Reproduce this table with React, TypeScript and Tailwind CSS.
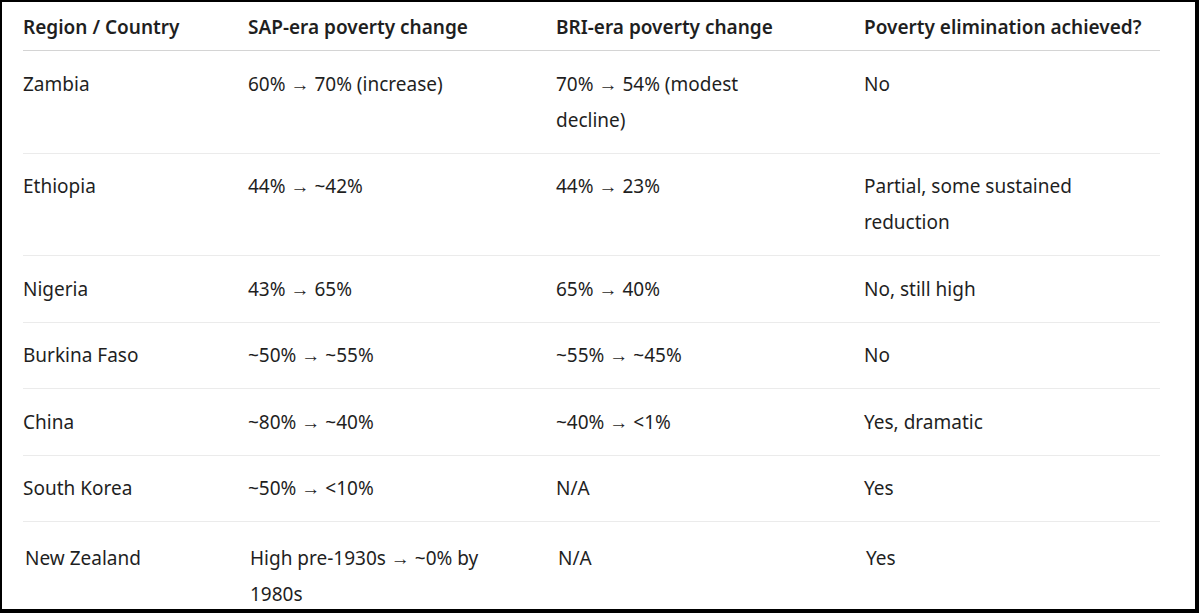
const rows: [string, string, string, string][] = [
  ["Zambia", "60% → 70% (increase)", "70% → 54% (modest decline)", "No"],
  ["Ethiopia", "44% → ~42%", "44% → 23%", "Partial, some sustained reduction"],
  ["Nigeria", "43% → 65%", "65% → 40%", "No, still high"],
  ["Burkina Faso", "~50% → ~55%", "~55% → ~45%", "No"],
  ["China", "~80% → ~40%", "~40% → <1%", "Yes, dramatic"],
  ["South Korea", "~50% → <10%", "N/A", "Yes"],
  ["New Zealand", "High pre-1930s → ~0% by 1980s", "N/A", "Yes"],
];

export default function App() {
  return (
    <div className="w-[1199px] h-[613px] overflow-hidden bg-white border-black border-t-2 border-l-2 border-r-4 border-b-4 font-['Noto_Sans',sans-serif] text-[#1f1f1f] text-[19px] leading-[36px]">
      <table className="ml-[21px] w-[1137px] table-fixed border-collapse text-left">
        <colgroup>
          <col className="w-[225px]" />
          <col className="w-[308px]" />
          <col className="w-[308px]" />
          <col className="w-[296px]" />
        </colgroup>
        <thead>
          <tr className="border-b border-[#d4d4d4]">
            <th className="pt-[7px] pb-[5px] font-semibold align-top whitespace-nowrap">Region / Country</th>
            <th className="pt-[7px] pb-[5px] pr-[38px] font-semibold align-top whitespace-nowrap">SAP-era poverty change</th>
            <th className="pt-[7px] pb-[5px] pr-[68px] font-semibold align-top whitespace-nowrap">BRI-era poverty change</th>
            <th className="pt-[7px] pb-[5px] font-semibold align-top whitespace-nowrap">Poverty elimination achieved?</th>
          </tr>
        </thead>
        <tbody>
          {rows.map((r, i) => {
            // the last row sits a touch lower and to the right in the picture
            const cell = i === rows.length - 1 ? "pl-[2px] pt-[17.75px] pb-[14.75px]" : "py-[14.75px]";
            return (
              <tr key={r[0]} className="border-b border-[#ebebeb]">
                <td className={`${cell} align-top`}>{r[0]}</td>
                <td className={`${cell} pr-[38px] align-top`}>{r[1]}</td>
                <td className={`${cell} pr-[68px] align-top`}>{r[2]}</td>
                <td className={`${cell} pr-[11px] align-top`}>{r[3]}</td>
              </tr>
            );
          })}
        </tbody>
      </table>
    </div>
  );
}
